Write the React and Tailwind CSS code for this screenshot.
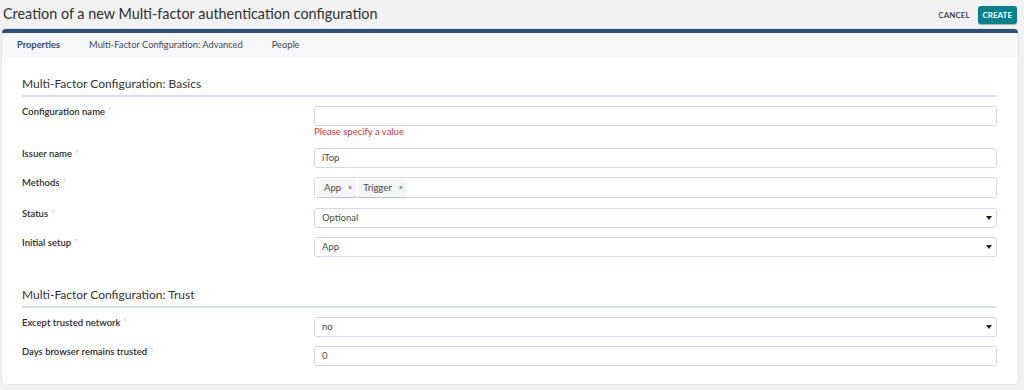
import React from "react";

function Label({ children }) {
  return (
    <div className="w-[292px] shrink-0 text-[9.5px] font-semibold leading-[12px] text-[#2b2b2b]">
      {children}
      <span className="relative top-[-3px] ml-[3px] inline-block text-[6.5px] font-normal leading-none text-[#b8bec6]">?</span>
    </div>
  );
}

function Field({ children, select }) {
  return (
    <div className="relative flex h-[20px] flex-1 items-center rounded-[3px] border border-[#d3dae1] bg-white px-[7px] text-[9.5px] leading-none text-[#4a4a4a]">
      {children}
      {select && (
        <span className="absolute right-[4px] top-[7px] h-0 w-0 border-x-[3.5px] border-t-[4px] border-x-transparent border-t-[#222]" />
      )}
    </div>
  );
}

function Chip({ children }) {
  return (
    <span className="mr-[2px] flex h-[18px] items-center rounded-[2px] bg-[#f4f5f7] pl-[5px] pr-[4px] text-[9.5px] leading-none text-[#4a4a4a] shadow-[0_1px_1px_rgba(0,0,0,0.12)]">
      {children}
      <span className="ml-[7px] text-[7px]">×</span>
    </span>
  );
}

function Section({ title }) {
  return (
    <div className="border-b-2 border-[#d8dfe6] pb-[4px] text-[12px] leading-[14px] text-[#333]">{title}</div>
  );
}

export default function App() {
  return (
    <div className="h-[390px] w-[1024px] overflow-hidden bg-[#f2f2f2] font-['Lato',sans-serif]">
      {/* header */}
      <div className="flex h-[29px] items-center justify-between pl-[3px] pr-[7px]">
        <h1 className="text-[14.4px] leading-none text-[#2f2f2f]">
          Creation of a new Multi-factor authentication configuration
        </h1>
        <div className="flex items-center gap-[8px]">
          <button className="text-[8px] font-semibold text-[#333]">CANCEL</button>
          <button className="h-[18px] rounded-[3px] bg-[#01828a] px-[5px] text-[8px] font-bold text-white shadow-[0_1px_1px_rgba(0,0,0,0.3)]">
            CREATE
          </button>
        </div>
      </div>

      {/* card */}
      <div className="ml-[2px] mr-[6px] h-[355px] rounded-[4px] border-t-[4px] border-[#2c4f7b] bg-white shadow-[0_0_0_1px_#e2e5e8]">
        <div className="flex h-[24px] items-center gap-[29px] bg-[#f6f7f9] pl-[15px] text-[9.3px] leading-none text-[#3f4651]">
          <span className="font-bold text-[#2b4c73]">Properties</span>
          <span>Multi-Factor Configuration: Advanced</span>
          <span>People</span>
        </div>

        <div className="pl-[20px] pr-[21px] pt-[20px]">
          <Section title="Multi-Factor Configuration: Basics" />

          <div className="mt-[9px] flex">
            <Label>Configuration name</Label>
            <div className="flex-1">
              <div className="flex"><Field /></div>
              <div className="text-[9.5px] leading-[11px] text-[#d03535]">Please specify a value</div>
            </div>
          </div>

          <div className="mt-[11px] flex">
            <Label>Issuer name</Label>
            <Field>iTop</Field>
          </div>

          <div className="mt-[9px] flex">
            <Label>Methods</Label>
            <div className="flex h-[21px] flex-1 items-center rounded-[3px] border border-[#d3dae1] bg-white px-[4px]">
              <Chip>App</Chip>
              <Chip>Trigger</Chip>
            </div>
          </div>

          <div className="mt-[10px] flex">
            <Label>Status</Label>
            <Field select>Optional</Field>
          </div>

          <div className="mt-[9px] flex">
            <Label>Initial setup</Label>
            <Field select>App</Field>
          </div>

          <div className="mt-[31px]">
            <Section title="Multi-Factor Configuration: Trust" />
          </div>

          <div className="mt-[9px] flex">
            <Label>Except trusted network</Label>
            <Field select>no</Field>
          </div>

          <div className="mt-[9px] flex">
            <Label>Days browser remains trusted</Label>
            <Field>0</Field>
          </div>
        </div>
      </div>
    </div>
  );
}
